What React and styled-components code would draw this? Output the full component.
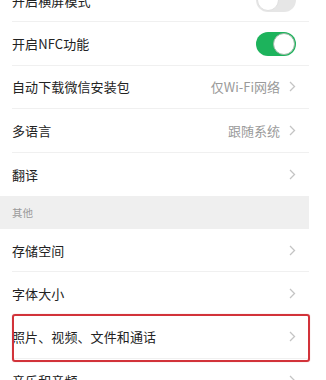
import styled, { createGlobalStyle } from "styled-components";

const GlobalStyle = createGlobalStyle`
  html, body {
    margin: 0;
    padding: 0;
    background: #ffffff;
    overflow: hidden;
  }
  body {
    font-family: "Noto Sans CJK SC", "Noto Sans", sans-serif;
  }
`;

const items = [
  { label: "开启横屏模式", toggle: "off" },
  { label: "开启NFC功能", toggle: "on" },
  { label: "自动下载微信安装包", value: "仅Wi-Fi网络", arrow: true },
  { label: "多语言", value: "跟随系统", arrow: true },
  { label: "翻译", arrow: true, last: true },
];

const others = [
  { label: "存储空间", arrow: true },
  { label: "字体大小", arrow: true },
  { label: "照片、视频、文件和通话", arrow: true, marked: true },
  { label: "音乐和音频", arrow: true, last: true },
];

function Chevron() {
  return (
    <svg width="7" height="11" viewBox="0 0 7 11">
      <path d="M1 1 L5.5 5.5 L1 10" fill="none" stroke="#c4c4c4" strokeWidth="1.3" />
    </svg>
  );
}

function SettingRow({ item }) {
  return (
    <Row last={item.last}>
      <Label>{item.label}</Label>
      <Right>
        {item.value && <Value>{item.value}</Value>}
        {item.toggle && (
          <Switch on={item.toggle === "on"}>
            <Knob on={item.toggle === "on"} />
          </Switch>
        )}
        {item.arrow && <Chevron />}
      </Right>
      {item.marked && <Highlight />}
    </Row>
  );
}

export default function App() {
  return (
    <>
      <GlobalStyle />
      <Screen>
        {items.map((item) => (
          <SettingRow key={item.label} item={item} />
        ))}
        <SectionTitle>其他</SectionTitle>
        {others.map((item) => (
          <SettingRow key={item.label} item={item} />
        ))}
      </Screen>
    </>
  );
}

const Screen = styled.div`
  width: 309px;
  margin-top: -21px;
  display: flex;
  flex-direction: column;
  background: #ffffff;
`;

const Row = styled.div`
  position: relative;
  height: 43.4px;
  margin-left: 12px;
  padding-right: 13px;
  box-sizing: border-box;
  display: flex;
  align-items: center;
  justify-content: space-between;
  border-bottom: ${(props) => (props.last ? "none" : "1px solid #f0f0f0")};
`;

const Label = styled.span`
  font-size: 13px;
  color: #222222;
  letter-spacing: 0.1px;
`;

const Right = styled.div`
  display: flex;
  align-items: center;
  gap: 9px;
`;

const Value = styled.span`
  font-size: 13px;
  color: #9a9a9a;
`;

const Switch = styled.div`
  width: 40px;
  height: 24px;
  border-radius: 12px;
  box-sizing: border-box;
  background: ${(props) => (props.on ? "#1db35c" : "#e6e6e6")};
  display: flex;
  align-items: center;
  justify-content: ${(props) => (props.on ? "flex-end" : "flex-start")};
  padding: 1px;
`;

const Knob = styled.div`
  width: 22px;
  height: 22px;
  border-radius: 50%;
  background: #ffffff;
  box-sizing: border-box;
  border: ${(props) => (props.on ? "1px solid #9ab8a4" : "1px solid #e0e0e0")};
`;

const SectionTitle = styled.div`
  height: 33px;
  background: #efefef;
  padding-left: 12px;
  display: flex;
  align-items: center;
  font-size: 10.5px;
  color: #9a9a9a;
`;

const Highlight = styled.div`
  position: absolute;
  left: 0;
  right: -1px;
  top: -2px;
  bottom: -4px;
  border: 2px solid #d2333a;
  border-radius: 3px;
  box-shadow: 0 0 1px rgba(210, 51, 58, 0.5);
  pointer-events: none;
`;
